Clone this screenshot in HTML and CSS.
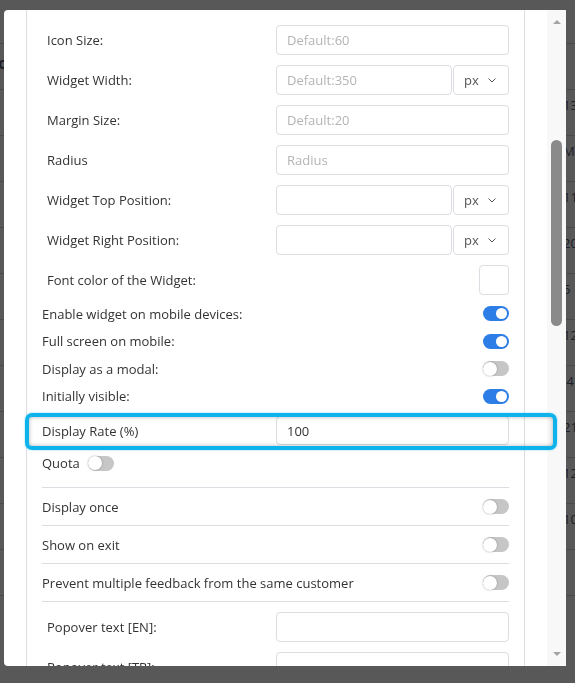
FILE: index.html
```html
<!DOCTYPE html>
<html lang="en">
<head>
<meta charset="utf-8">
<title>Widget settings</title>
<link rel="stylesheet" href="styles.css">
</head>
<body>
<div class="page">
  <div class="page-head"></div>
  <div class="page-row"><span class="cell-l">c</span><span class="cell-r"></span></div>
  <div class="page-row"><span class="cell-l"></span><span class="cell-r">13</span></div>
  <div class="page-row"><span class="cell-l"></span><span class="cell-r">M</span></div>
  <div class="page-row"><span class="cell-l"></span><span class="cell-r">11</span></div>
  <div class="page-row"><span class="cell-l"></span><span class="cell-r">20</span></div>
  <div class="page-row"><span class="cell-l"></span><span class="cell-r">5</span></div>
  <div class="page-row"><span class="cell-l"></span><span class="cell-r">12</span></div>
  <div class="page-row"><span class="cell-l"></span><span class="cell-r">:4</span></div>
  <div class="page-row"><span class="cell-l"></span><span class="cell-r">21</span></div>
  <div class="page-row"><span class="cell-l"></span><span class="cell-r">12</span></div>
  <div class="page-row"><span class="cell-l"></span><span class="cell-r">10</span></div>
  <div class="page-row"><span class="cell-l"></span><span class="cell-r"></span></div>
</div>

<div class="modal">
  <div class="modal-body">
    <div class="card">
      <div class="form-row">
        <label class="label">Icon Size:</label>
        <input class="field" placeholder="Default:60">
      </div>
      <div class="form-row">
        <label class="label">Widget Width:</label>
        <div class="group">
          <input class="field" placeholder="Default:350">
          <div class="select">px <svg class="chev" width="8" height="5" viewBox="0 0 8 5"><polyline points="0.5,0.5 4,4 7.5,0.5" fill="none" stroke="#555" stroke-width="1"/></svg></div>
        </div>
      </div>
      <div class="form-row">
        <label class="label">Margin Size:</label>
        <input class="field" placeholder="Default:20">
      </div>
      <div class="form-row gap-extra">
        <label class="label">Radius</label>
        <input class="field" placeholder="Radius">
      </div>
      <div class="form-row">
        <label class="label">Widget Top Position:</label>
        <div class="group">
          <input class="field">
          <div class="select">px <svg class="chev" width="8" height="5" viewBox="0 0 8 5"><polyline points="0.5,0.5 4,4 7.5,0.5" fill="none" stroke="#555" stroke-width="1"/></svg></div>
        </div>
      </div>
      <div class="form-row">
        <label class="label">Widget Right Position:</label>
        <div class="group">
          <input class="field">
          <div class="select">px <svg class="chev" width="8" height="5" viewBox="0 0 8 5"><polyline points="0.5,0.5 4,4 7.5,0.5" fill="none" stroke="#555" stroke-width="1"/></svg></div>
        </div>
      </div>
      <div class="form-row color-row">
        <label class="label">Font color of the Widget:</label>
        <div class="swatch"></div>
      </div>

      <div class="toggles">
        <div class="toggle-row"><span>Enable widget on mobile devices:</span><span class="switch on"></span></div>
        <div class="toggle-row"><span>Full screen on mobile:</span><span class="switch on"></span></div>
        <div class="toggle-row"><span>Display as a modal:</span><span class="switch"></span></div>
        <div class="toggle-row"><span>Initially visible:</span><span class="switch on"></span></div>
      </div>

      <div class="rate-row">
        <span class="rate-label">Display Rate (%)</span>
        <input class="field" value="100">
        <span class="highlight"></span>
      </div>

      <div class="quota-row"><span>Quota</span><span class="switch"></span></div>

      <div class="options">
        <div class="option-row"><span>Display once</span><span class="switch"></span></div>
        <div class="option-row"><span>Show on exit</span><span class="switch"></span></div>
        <div class="option-row"><span>Prevent multiple feedback from the same customer</span><span class="switch"></span></div>
      </div>

      <div class="popovers">
        <div class="form-row">
          <label class="label">Popover text [EN]:</label>
          <input class="field">
        </div>
        <div class="form-row">
          <label class="label">Popover text [TR]:</label>
          <input class="field">
        </div>
      </div>
    </div>
  </div>
  <div class="scrollbar">
    <span class="arrow up"></span>
    <span class="thumb"></span>
    <span class="arrow down"></span>
  </div>
</div>
</body>
</html>
```

FILE: styles.css
```css
* { box-sizing: border-box; }

html, body {
  margin: 0;
  padding: 0;
}

body {
  width: 575px;
  height: 683px;
  overflow: hidden;
  background: #585858;
  font-family: "Open Sans", "Liberation Sans", sans-serif;
  font-size: 13px;
  color: #333;
}

/* dimmed page behind the modal */
.page {
  width: 575px;
}
.page-head {
  height: 44px;
  border-bottom: 1px solid #4a4a4a;
}
.page-row {
  height: 46px;
  border-bottom: 1px solid #4a4a4a;
  display: flex;
  justify-content: space-between;
  align-items: flex-start;
  padding-top: 5px;
  line-height: 20px;
  color: #1e1e28;
  font-size: 13px;
}
.cell-l {
  width: 8px;
  margin-left: -2px;
  font-size: 16px;
  font-weight: 700;
  padding-top: 4px;
}
.cell-r {
  width: 13px;
  margin-right: -1px;
  white-space: nowrap;
}

/* modal */
.modal {
  position: fixed;
  left: 4px;
  top: 10px;
  width: 562px;
  height: 656px;
  background: #fff;
  border-radius: 4px 0 0 4px;
  display: flex;
  overflow: hidden;
}
.modal-body {
  flex: 1;
  padding: 0 22px;
}
.card {
  border-left: 1px solid #dcdee2;
  border-right: 1px solid #dcdee2;
  padding: 15px 15px 0;
  min-height: 700px;
}

.form-row {
  display: grid;
  grid-template-columns: 1fr 233px;
  align-items: center;
  height: 30px;
  margin-bottom: 10px;
}
.form-row.gap-extra { margin-top: 1px; }
.label {
  padding-left: 5px;
  color: #333;
}
.field {
  display: block;
  width: 100%;
  height: 30px;
  padding: 0 10px;
  border: 1px solid #dcdce3;
  border-radius: 4px;
  font-family: "Open Sans", "Liberation Sans", sans-serif;
  font-size: 13px;
  color: #333;
  background: #fff;
  outline: none;
}
.field::placeholder { color: #b4b4b8; }

.group {
  display: grid;
  grid-template-columns: 1fr 56px;
  column-gap: 1px;
}
.select {
  height: 30px;
  border: 1px solid #dcdce3;
  border-radius: 4px;
  display: flex;
  align-items: center;
  padding-left: 10px;
  gap: 9px;
  color: #555;
}
.chev { display: block; }

.color-row { margin-bottom: 5px; }
.swatch {
  justify-self: end;
  width: 30px;
  height: 30px;
  border: 1px solid #dcdce3;
  border-radius: 4px;
}

/* toggles */
.toggle-row {
  height: 27.5px;
  display: flex;
  justify-content: space-between;
  align-items: center;
}
.switch {
  position: relative;
  width: 26px;
  height: 15px;
  border-radius: 8px;
  background: #c6c6c6;
  flex: none;
}
.switch::after {
  content: "";
  position: absolute;
  left: 0;
  top: 0.5px;
  width: 14px;
  height: 14px;
  border-radius: 50%;
  background: #fff;
  box-shadow: 0 0 2px rgba(0, 0, 0, 0.35);
}
.switch.on { background: #2c7de6; }
.switch.on::after {
  left: auto;
  right: 2px;
  top: 2px;
  width: 11px;
  height: 11px;
  box-shadow: none;
}

/* display rate */
.rate-row {
  position: relative;
  display: grid;
  grid-template-columns: 1fr 233px;
  align-items: center;
  height: 29px;
  margin-top: 6px;
}
.rate-row .field { height: 29px; }
.highlight {
  position: absolute;
  top: -3px;
  left: -17px;
  right: -48px;
  bottom: -5px;
  border: 4px solid #0fb3ec;
  border-radius: 7px;
  box-shadow: inset 0 0 4px rgba(0, 0, 0, 0.3), 0 0 2px rgba(15, 179, 236, 0.6);
  pointer-events: none;
}

.quota-row {
  display: flex;
  align-items: center;
  gap: 8px;
  height: 24px;
  margin-top: 6px;
}

.options { margin-top: 12px; }
.option-row {
  border-top: 1px solid #dcdce3;
  height: 38px;
  display: flex;
  justify-content: space-between;
  align-items: center;
}
.popovers {
  border-top: 1px solid #dcdce3;
  padding-top: 10px;
}

/* fake scrollbar */
.scrollbar {
  width: 19px;
  background: #f8f8f8;
  display: flex;
  flex-direction: column;
  align-items: center;
}
.arrow {
  width: 0;
  height: 0;
  border-left: 4px solid transparent;
  border-right: 4px solid transparent;
}
.arrow.up {
  margin-top: 10px;
  border-bottom: 4px solid #a3a3a3;
}
.arrow.down {
  margin-top: auto;
  margin-bottom: 10px;
  border-top: 4px solid #a3a3a3;
}
.thumb {
  margin-top: 116px;
  width: 11px;
  height: 186px;
  border-radius: 6px;
  background: #8a8a8a;
}
```
